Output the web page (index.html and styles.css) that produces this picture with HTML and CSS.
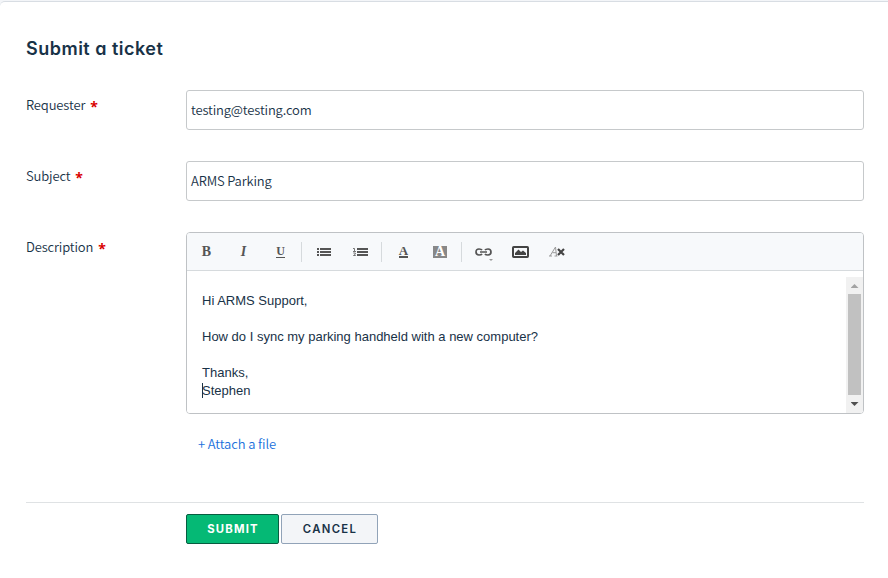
FILE: index.html
```html
<!DOCTYPE html>
<html lang="en">
<head>
<meta charset="utf-8">
<title>Submit a ticket</title>
<link rel="stylesheet" href="styles.css">
</head>
<body>
<main class="card">
  <h1 class="title">Submit a ticket</h1>
  <form class="form">
    <div class="row">
      <div class="label"><span class="requester">Requester</span><span class="required">*</span></div>
      <div class="input"><span class="email">testing@testing.com</span></div>
    </div>
    <div class="row">
      <div class="label"><span class="subject">Subject</span><span class="required">*</span></div>
      <div class="input"><span class="parking">ARMS Parking</span></div>
    </div>
    <div class="row">
      <div class="label"><span class="description">Description</span><span class="required">*</span></div>
      <div class="editor">
        <div class="toolbar">
          <span class="tool glyph">B</span>
          <span class="tool glyph italic">I</span>
          <span class="tool glyph"><span class="underlined">U</span></span>
          <i class="divider"></i>
          <span class="tool"><svg width="14" height="8" viewBox="0 0 14 8" shape-rendering="crispEdges"><path d="M0 0h2v2H0zM3 0h11v2H3zM0 3h2v2H0zM3 3h11v2H3zM0 6h2v2H0zM3 6h11v2H3z"/></svg></span>
          <span class="tool"><svg width="15" height="8" viewBox="0 0 15 8"><path d="M4 0h11v2H4zM4 3h11v2H4zM4 6h11v2H4z"/><path d="M0 .5h1.5V3M0 3.5h3M.3 5h2v1.2L.5 7.5h2.3" fill="none" stroke="#555" stroke-width=".8"/></svg></span>
          <i class="divider"></i>
          <span class="tool glyph"><span class="underlined color">A</span></span>
          <span class="tool glyph"><span class="highlight">A</span></span>
          <i class="divider"></i>
          <span class="tool link"><svg width="17" height="8" viewBox="0 0 17 8"><path d="M7 2.2C6.500 1.200 5.500 1 4 1 2 1 1 2 1 4s1 3 3 3c1.500 0 2.500-.2 3-1.200M10 2.200C10.500 1.200 11.500 1 13 1c2 0 3 1 3 3s-1 3-3 3c-1.500 0-2.500-.2-3-1.200M5 4h7" fill="none" stroke="#555" stroke-width="1.700"/></svg><i class="menu-arrow"></i></span>
          <span class="tool"><svg width="17" height="12" viewBox="0 0 17 12"><rect x="1" y="1" width="15" height="10" rx=".7" fill="none" stroke="#444" stroke-width="2"/><path d="M3 9V7l3.500-3.500L9 6l2-1.500L14 7v2z" fill="#444"/></svg></span>
          <span class="tool clear"><svg width="16" height="11" viewBox="0 0 16 11"><path d="M0 10h3M1 10 6.500 1 7.500 10M3.500 6.700H7M5.500 10h3" fill="none" stroke="#999" stroke-width="1"/><path d="m9 3 6 6M15 3 9 9" fill="none" stroke="#444" stroke-width="2.200"/></svg></span>
        </div>
        <div class="message">
          <div class="copy">
            <p><span class="greeting">Hi ARMS Support,</span></p>
            <p><span class="question">How do I sync my parking handheld with a new computer?</span></p>
            <p><span class="thanks">Thanks,</span><br><i class="caret"></i><span class="name">Stephen</span></p>
          </div>
          <div class="scrollbar">
            <i class="arrow up"></i><i class="thumb"></i><i class="arrow down"></i>
          </div>
        </div>
      </div>
    </div>
    <a class="attach">+ Attach a file</a>
    <div class="actions">
      <div class="button submit"><span>SUBMIT</span></div>
      <div class="button cancel"><span>CANCEL</span></div>
    </div>
  </form>
</main>
</body>
</html>
```
FILE: styles.css
```css
* { box-sizing: border-box; }
body { margin: 0; background: #f3f5f8; color: #183247; font: 350 13px/20px "Noto Sans CJK SC", "Open Sans", sans-serif; letter-spacing: -.15px; }
.card { margin-top: 1px; height: 577px; padding: 35px 24px 0 26px; background: #fff; border-top: 1px solid #d8dde3; border-top-left-radius: 5px; overflow: hidden; }
.title { margin: 0; height: 53px; font: 600 18px/24px Inter, sans-serif; font-feature-settings: "cv11"; letter-spacing: .49px; white-space: nowrap; }
.row { display: flex; align-items: flex-start; margin-bottom: 31px; }
.label { width: 160px; display: flex; padding-top: 5px; white-space: nowrap; }
.required { margin-left: 5px; height: 20px; color: #d90000; font: bold 14px/24px "Open Sans", sans-serif; }
.input { flex: 1; height: 40px; padding: 9px 4px; border: 1px solid #c6c9cb; border-radius: 3px; white-space: nowrap; }
.editor { flex: 1; height: 182px; border: 1px solid #bfc2c5; border-radius: 4px; overflow: hidden; }
.toolbar { display: flex; align-items: center; height: 38px; padding-left: 1px; background: #f7f9fb; border-bottom: 1px solid #d6dadd; }
.tool { width: 37px; height: 37px; display: flex; align-items: center; justify-content: center; position: relative; }
.tool svg { display: block; fill: #555; }
.clear { padding-right: 2px; }
.glyph { color: #555; font: bold 14px/14px "Liberation Serif", serif; letter-spacing: 0; }
.italic { font-style: italic; }
.underlined { height: 12px; line-height: 10px; font-size: 12px; border-bottom: 1px solid #555; }
.color { height: 12px; line-height: 9px; font-size: 13px; border-bottom-width: 2px; }
.highlight { width: 14px; height: 12px; margin-right: 1px; background: #888; color: #fff; line-height: 12px; text-align: center; }
.divider { width: 1px; height: 20px; margin: 0 3px 0 2px; background: #d6dadd; }
.menu-arrow { position: absolute; left: 24px; top: 26px; border: 2px solid transparent; border-top-color: #999; }
.message { display: flex; height: 142px; padding: 6px 0 0 15px; background: #fff; }
.copy { flex: 1; padding-top: 15px; font: 13px/18px "Liberation Sans", Arial, sans-serif; letter-spacing: 0; }
.copy p { margin: 0 0 18px; white-space: nowrap; }
.caret { display: inline-block; width: 1px; height: 15px; margin-right: -1px; vertical-align: -3px; background: #183247; }
.scrollbar { width: 17px; height: 136px; background: #f1f1f1; padding: 7px 2px; }
.arrow { display: block; width: 8px; height: 4px; margin: 0 auto; }
.up { background: #a3a3a3; clip-path: polygon(50% 0, 100% 100%, 0 100%); }
.down { background: #505050; clip-path: polygon(0 0, 100% 0, 50% 100%); }
.thumb { display: block; height: 101px; margin: 6px 0 7px; background: #c1c1c1; }
.attach { display: block; width: 100px; margin: -11px 0 0 172px; color: #2070dc; letter-spacing: -.12px; white-space: nowrap; }
.actions { display: flex; gap: 2px; margin-top: 48px; padding: 11px 0 0 160px; border-top: 1px solid #dfe2e4; }
.button { height: 30px; border: 1px solid #91a3b8; border-radius: 2px; background: #f3f5f8; color: #183247; display: flex; align-items: center; justify-content: center; font: 600 11.300px/16px Inter, sans-serif; letter-spacing: 1.350px; }
.button span { padding-left: 1px; }
.submit { width: 93px; background: #05b975; border-color: #075d40; color: #fff; font-weight: 700; letter-spacing: 1.200px; }
.cancel { width: 97px; }
```
